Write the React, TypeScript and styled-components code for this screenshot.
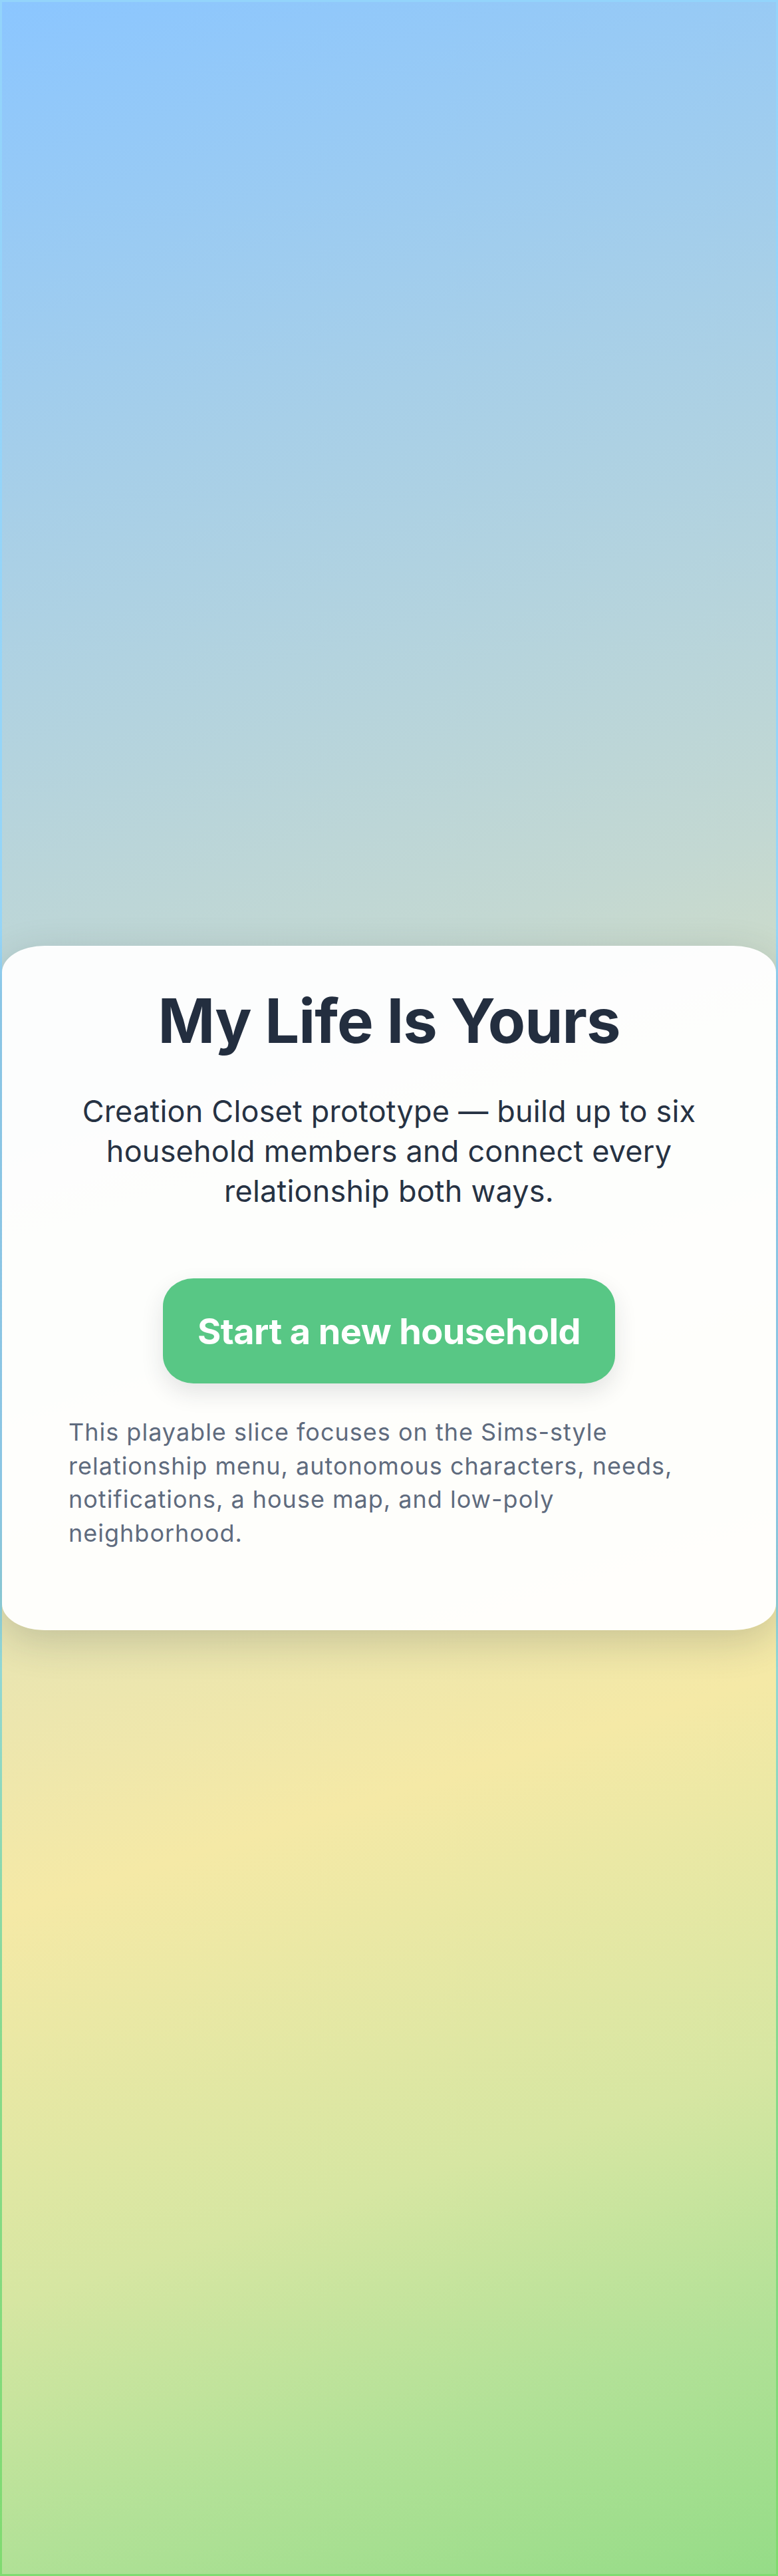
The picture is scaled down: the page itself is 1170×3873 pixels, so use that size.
import React from "react";
import styled, { createGlobalStyle } from "styled-components";

const GlobalStyle = createGlobalStyle`
  html, body {
    margin: 0;
    padding: 0;
  }
  body {
    font-family: Inter, "Noto Sans", "Liberation Sans", sans-serif;
    -webkit-font-smoothing: antialiased;
  }
  * {
    box-sizing: border-box;
  }
`;

// thin coloured rim around the whole screen
const Frame = styled.div`
  height: 3873px;
  padding: 3px;
  background: linear-gradient(
    180deg,
    #93d4fb 0%,
    #96d6f6 58%,
    #86da8a 80%,
    #7fdb70 100%
  );
`;

const Screen = styled.main`
  height: 100%;
  display: flex;
  flex-direction: column;
  justify-content: center;
  background: linear-gradient(
    163deg,
    #8bc6ff 0%,
    #a7cfe8 18%,
    #c3d8d2 38%,
    #e4e3b6 55%,
    #f5e9a6 68%,
    #d6e6a2 82%,
    #b2e197 91%,
    #95dc87 100%
  );
`;

const Card = styled.section`
  width: 100%;
  height: 1029px;
  padding: 62px 100px 0;
  display: flex;
  flex-direction: column;
  align-items: center;
  background: rgba(255, 255, 255, 0.95);
  border-radius: 64px / 40px;
  box-shadow: 0 16px 60px rgba(40, 52, 60, 0.2);
`;

const Title = styled.h1`
  margin: 0;
  font-size: 92px;
  line-height: 1.1;
  font-weight: 700;
  letter-spacing: -1px;
  color: #232e3f;
`;

const Lead = styled.p`
  margin: 56px 0 0;
  max-width: 970px;
  font-size: 45px;
  line-height: 60px;
  letter-spacing: 0.2px;
  text-align: center;
  color: #263243;
`;

const StartButton = styled.button`
  margin-top: 101px;
  width: 680px;
  height: 158px;
  border: none;
  border-radius: 46px / 42px;
  background: #58c785;
  color: #ffffff;
  font-family: inherit;
  font-size: 54px;
  font-weight: 700;
  letter-spacing: -0.6px;
  box-shadow: 0 14px 34px rgba(30, 40, 50, 0.12);
  cursor: pointer;
`;

const Note = styled.p`
  align-self: stretch;
  margin: 48px 0 0;
  font-size: 36px;
  line-height: 50.5px;
  letter-spacing: 1px;
  color: #5f6b7e;
`;

export default function App() {
  return (
    <>
      <GlobalStyle />
      <Frame>
        <Screen>
          <Card>
            <Title>My Life Is Yours</Title>
            <Lead>
              Creation Closet prototype — build up to six household members and
              connect every relationship both ways.
            </Lead>
            <StartButton type="button">Start a new household</StartButton>
            <Note>
              This playable slice focuses on the Sims-style relationship menu,
              autonomous characters, needs, notifications, a house map, and
              low-poly neighborhood.
            </Note>
          </Card>
        </Screen>
      </Frame>
    </>
  );
}
